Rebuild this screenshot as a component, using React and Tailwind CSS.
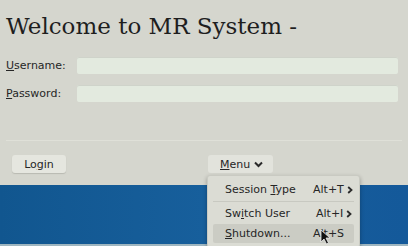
function Chevron() {
  return (
    <svg className="ml-[3px]" width="6" height="8" viewBox="0 0 6 8">
      <path d="M1.2 1 L4.5 4 L1.2 7" fill="none" stroke="#2a2a2a" strokeWidth="1.8" />
    </svg>
  )
}

export default function App() {
  return (
    <div className="relative w-[408px] h-[246px] overflow-hidden font-['DejaVu_Sans',sans-serif] text-[#262626]">
      <div className="flex h-[185px] flex-col bg-[#d5d6ce] px-[6px]">
        <h1 className="mt-[15px] h-[23px] font-['DejaVu_Serif',serif] text-[23px] leading-[23px] text-[#1e1e1e]">
          Welcome to MR System -
        </h1>

        <div className="mt-[19px] flex h-[17px] items-center">
          <label className="w-[71px] text-[11px] leading-none">
            <u>U</u>sername:
          </label>
          <div className="h-[17px] flex-1 rounded-[2px] bg-[#e3eadf] mr-[4px] shadow-[inset_0_1px_0_#cfd3ca]" />
        </div>
        <div className="mt-[11px] flex h-[17px] items-center">
          <label className="w-[71px] text-[11px] leading-none">
            <u>P</u>assword:
          </label>
          <div className="h-[17px] flex-1 rounded-[2px] bg-[#e3eadf] mr-[4px] shadow-[inset_0_1px_0_#cfd3ca]" />
        </div>

        <div className="mt-[38px] h-px bg-[#dfe0d8]" />

        <div className="mt-[14px] flex h-[18px] items-center">
          <button className="ml-[6px] flex h-[18px] w-[54px] items-center justify-center rounded-[3px] bg-[#e5e6df] text-[11px] leading-none shadow-[0_1px_1px_#b9bab2]">
            Lo<u>g</u>in
          </button>
          <button className="ml-[142px] flex h-[18px] w-[65px] items-center gap-[4px] rounded-[3px] bg-[#e2e3dc] pl-[12px] text-[11px] leading-none">
            <span>
              <u>M</u>enu
            </span>
            <svg width="9" height="7" viewBox="0 0 9 7">
              <path d="M1 1.5 L4.5 5 L8 1.5" fill="none" stroke="#2a2a2a" strokeWidth="2" />
            </svg>
          </button>
        </div>
      </div>

      <div className="h-[59px] bg-gradient-to-r from-[#11568f] via-[#175f9c] to-[#14599a]" />
      <div className="h-[2px] bg-[#9fb6c0]" />

      <div className="absolute left-[207px] top-[175px] w-[153px] rounded-[3px] border border-[#c9cac2] bg-[#dbdcd4] px-[5px] pt-[3px] pb-[4px] text-[11px] leading-none shadow-[0_2px_4px_rgba(0,0,0,0.3)]">
        <div className="flex h-[21px] items-center pl-[12px]">
          <span className="w-[88px]">
            Session <u>T</u>ype
          </span>
          <span>Alt+T</span>
          <Chevron />
        </div>
        <div className="my-[1px] h-px bg-[#c8c9c1]" />
        <div className="flex h-[21px] items-center pl-[12px]">
          <span className="w-[91px]">
            Sw<u>i</u>tch User
          </span>
          <span>Alt+I</span>
          <Chevron />
        </div>
        <div className="flex h-[19px] items-center rounded-[2px] bg-[#cbccc4] pl-[12px]">
          <span className="w-[88px]">
            <u>S</u>hutdown...
          </span>
          <span>Alt+S</span>
        </div>
      </div>

      <svg className="absolute left-[320px] top-[229px]" width="11" height="16" viewBox="0 0 11 16">
        <path d="M1 1 L1 13 L4 10 L6.5 15 L8.5 14 L6 9 L10 9 Z" fill="#111" stroke="#eee" strokeWidth="0.8" />
      </svg>
    </div>
  )
}
